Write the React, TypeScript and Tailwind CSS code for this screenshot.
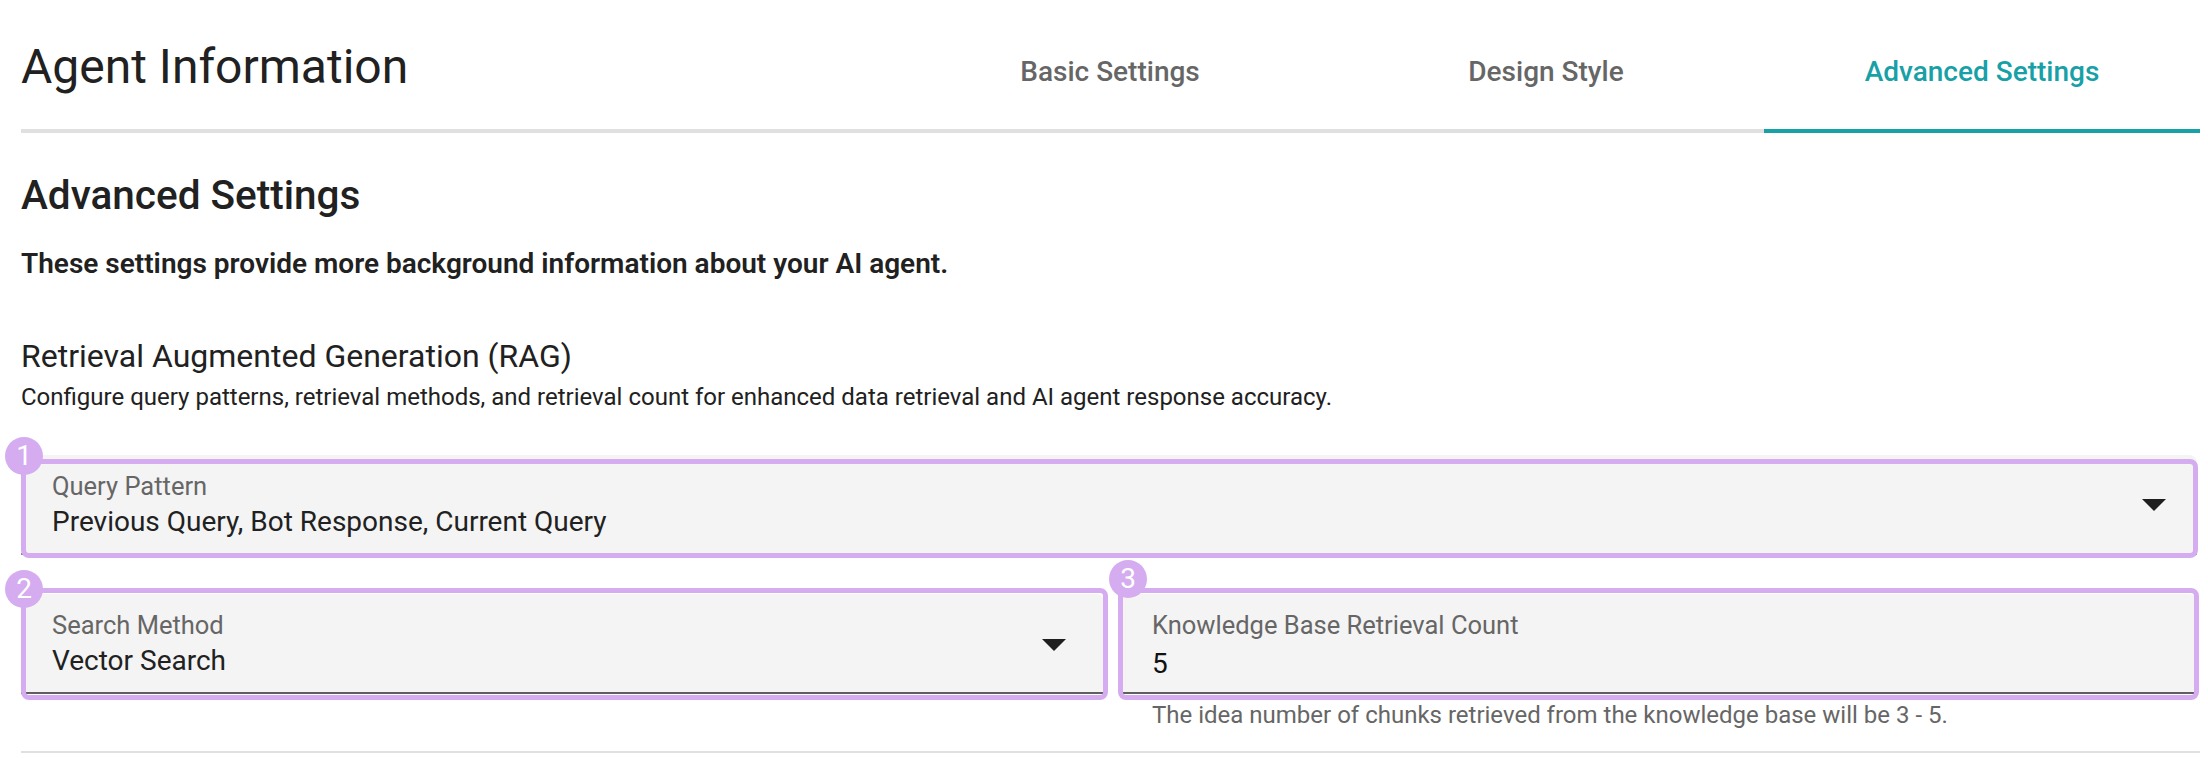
import React from "react";

function Arrow({ top, right }: { top: number; right: number }) {
  return (
    <svg
      width="24"
      height="12"
      viewBox="0 0 24 12"
      className="absolute"
      style={{ top, right }}
    >
      <path d="M0 0 L24 0 L12 12 Z" fill="#1f1f1f" />
    </svg>
  );
}

function Badge({ n, left, top }: { n: number; left: number; top: number }) {
  return (
    <div
      className="absolute z-20 w-[38px] h-[38px] rounded-full bg-[#d4acef] text-white text-[28px] leading-[38px] text-center"
      style={{ left, top }}
    >
      {n}
    </div>
  );
}

export default function App() {
  return (
    <div className="w-[2208px] h-[758px] bg-white overflow-hidden font-['Roboto',sans-serif] pl-[21px] pr-[8px]">
      {/* Header */}
      <div className="flex h-[133px]">
        <div className="flex-1 border-b-4 border-[#e0e0e0]">
          <h1 className="pt-[35px] text-[48px] leading-[64px] text-[#212121] font-normal">
            Agent Information
          </h1>
        </div>
        <div className="w-[436px] border-b-4 border-[#e0e0e0] flex justify-center pt-[47px] text-[28px] leading-[49px] font-medium text-[#666666]">
          Basic Settings
        </div>
        <div className="w-[436px] border-b-4 border-[#e0e0e0] flex justify-center pt-[47px] text-[28px] leading-[49px] font-medium text-[#666666]">
          Design Style
        </div>
        <div className="w-[436px] border-b-4 border-[#17a1a7] flex justify-center pt-[47px] text-[28px] leading-[49px] font-medium text-[#17a1a7]">
          Advanced Settings
        </div>
      </div>

      <h2 className="mt-[30px] text-[40.5px] leading-[64px] font-medium text-[#212121]">
        Advanced Settings
      </h2>
      <p className="mt-[16px] text-[28px] leading-[42px] font-semibold text-[#212121]">
        These settings provide more background information about your AI agent.
      </p>
      <h3 className="mt-[47px] text-[32px] leading-[48px] font-normal text-[#212121]">
        Retrieval Augmented Generation (RAG)
      </h3>
      <p className="text-[24px] leading-[34px] text-[#212121]">
        Configure query patterns, retrieval methods, and retrieval count for enhanced data retrieval and AI agent response accuracy.
      </p>

      <div className="pr-[3px]">
        {/* Field 1 */}
        <div className="relative mt-[41px] h-[100px] bg-[#f4f4f4] rounded-t-[8px] border-b-2 border-[#8a8a8a] pl-[31px] pt-[19px]">
          <div className="text-[25.5px] leading-[24px] text-[#666666]">Query Pattern</div>
          <div className="mt-[10px] text-[28px] leading-[28px] text-[#212121]">
            Previous Query, Bot Response, Current Query
          </div>
          <Arrow top={44} right={31} />
          <div className="pointer-events-none absolute z-10 top-[4px] -bottom-[5px] left-0 -right-[1px] border-[5px] border-[#d4acef] rounded-[8px]" />
          <Badge n={1} left={-16} top={-18} />
        </div>

        {/* Row 2 */}
        <div className="mt-[39px] flex gap-[17px] items-start">
          <div className="relative w-[1083px] h-[100px] bg-[#f4f4f4] rounded-t-[8px] border-b-2 border-[#5f5f5f] pl-[31px] pt-[19px]">
            <div className="text-[25.5px] leading-[24px] text-[#666666]">Search Method</div>
            <div className="mt-[10px] text-[28px] leading-[28px] text-[#212121]">Vector Search</div>
            <Arrow top={45} right={38} />
            <div className="pointer-events-none absolute z-10 -top-[6px] -bottom-[8px] left-0 -right-[4px] border-[5px] border-[#d4acef] rounded-[8px]" />
            <Badge n={2} left={-16} top={-24} />
          </div>
          <div className="flex-1">
            <div className="relative h-[100px] bg-[#f4f4f4] rounded-t-[8px] border-b-2 border-[#5f5f5f] pl-[31px] pt-[19px]">
              <div className="text-[25.5px] leading-[24px] text-[#666666]">Knowledge Base Retrieval Count</div>
              <div className="mt-[13px] text-[28px] leading-[28px] text-[#111111]">5</div>
              <div className="pointer-events-none absolute z-10 -top-[6px] -bottom-[8px] -left-[3px] -right-[2px] border-[5px] border-[#d4acef] rounded-[8px]" />
              <Badge n={3} left={-12} top={-34} />
            </div>
            <div className="mt-[1px] pl-[31px] text-[24px] leading-[40px] text-[#666666]">
              The idea number of chunks retrieved from the knowledge base will be 3 - 5.
            </div>
          </div>
        </div>
      </div>

      <div className="mt-[16px] h-[2px] bg-[#e0e0e0]" />
    </div>
  );
}
